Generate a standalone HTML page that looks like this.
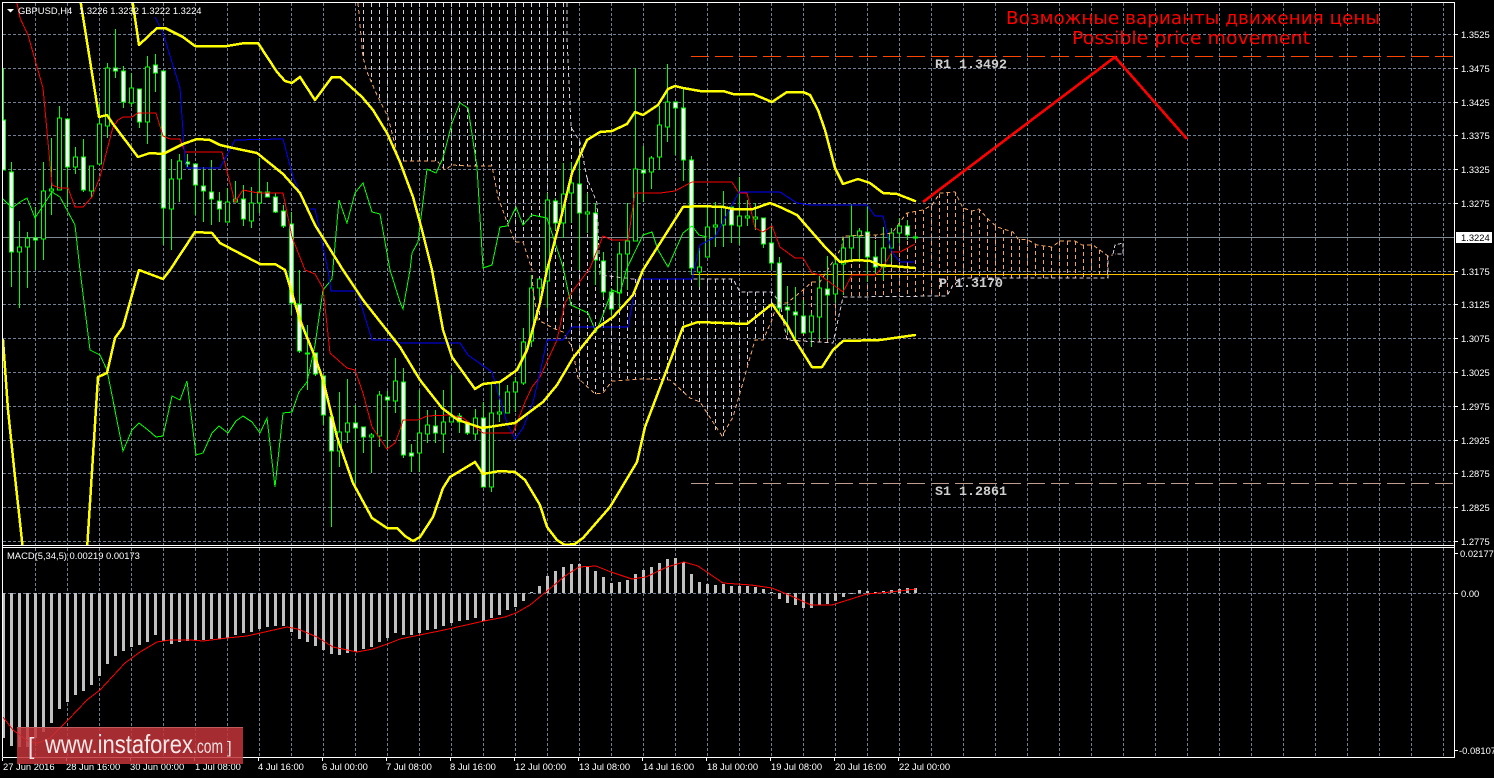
<!DOCTYPE html>
<html><head><meta charset="utf-8"><title>GBPUSD,H4</title>
<style>html,body{margin:0;padding:0;background:#000;width:1494px;height:778px;overflow:hidden}svg{display:block}
text{font-family:"Liberation Sans",sans-serif;font-size:9.4px;fill:#fff}
.m{font-family:"Liberation Mono",monospace;font-size:13.33px;fill:#cfcfcf;font-weight:bold}
.r{font-family:"DejaVu Sans","Liberation Sans",sans-serif;font-size:18px;fill:#f00}
.l{fill:none;shape-rendering:crispEdges}
</style></head><body>
<svg width="1494" height="778" viewBox="0 0 1494 778" xmlns="http://www.w3.org/2000/svg">
<defs><clipPath id="c"><rect x="3" y="3" width="1451" height="542"/></clipPath></defs>
<rect width="1494" height="778" fill="#000"/>
<!-- grid -->
<path class="l" stroke="#708090" stroke-dasharray="3 2" d="M3 34.5H1454M3 68.5H1454M3 102.5H1454M3 135.5H1454M3 169.5H1454M3 203.5H1454M3 271.5H1454M3 304.5H1454M3 338.5H1454M3 372.5H1454M3 406.5H1454M3 440.5H1454M3 473.5H1454M3 507.5H1454M3 541.5H1454M3 593.5H1454"/>
<path class="l" stroke="#708090" stroke-dasharray="3 2" d="M35.5 3V545M67.5 3V545M99.5 3V545M131.5 3V545M163.5 3V545M195.5 3V545M227.5 3V545M259.5 3V545M291.5 3V545M323.5 3V545M355.5 3V545M387.5 3V545M419.5 3V545M451.5 3V545M483.5 3V545M515.5 3V545M547.5 3V545M579.5 3V545M611.5 3V545M643.5 3V545M675.5 3V545M707.5 3V545M739.5 3V545M771.5 3V545M803.5 3V545M835.5 3V545M867.5 3V545M899.5 3V545M931.5 3V545M963.5 3V545M995.5 3V545M1027.5 3V545M1059.5 3V545M1091.5 3V545M1123.5 3V545M1155.5 3V545M1187.5 3V545M1219.5 3V545M1251.5 3V545M1283.5 3V545M1315.5 3V545M1347.5 3V545M1379.5 3V545M1411.5 3V545M1443.5 3V545"/>
<path class="l" stroke="#708090" stroke-dasharray="3 2" d="M35.5 548V757M67.5 548V757M99.5 548V757M131.5 548V757M163.5 548V757M195.5 548V757M227.5 548V757M259.5 548V757M291.5 548V757M323.5 548V757M355.5 548V757M387.5 548V757M419.5 548V757M451.5 548V757M483.5 548V757M515.5 548V757M547.5 548V757M579.5 548V757M611.5 548V757M643.5 548V757M675.5 548V757M707.5 548V757M739.5 548V757M771.5 548V757M803.5 548V757M835.5 548V757M867.5 548V757M899.5 548V757M931.5 548V757M963.5 548V757M995.5 548V757M1027.5 548V757M1059.5 548V757M1091.5 548V757M1123.5 548V757M1155.5 548V757M1187.5 548V757M1219.5 548V757M1251.5 548V757M1283.5 548V757M1315.5 548V757M1347.5 548V757M1379.5 548V757M1411.5 548V757M1443.5 548V757"/>
<g clip-path="url(#c)">
<!-- cloud hatch -->
<path class="l" stroke="#d8cbdc" stroke-dasharray="4 3" d="M363.5 3V57M371.5 3V82M379.5 3V100M387.5 3V115M395.5 3V150M403.5 3V161M411.5 3V161M419.5 3V161M427.5 3V161M435.5 3V161M443.5 3V168M451.5 3V165M459.5 3V166M467.5 3V166M475.5 3V166M483.5 3V166M491.5 3V166M499.5 3V198M507.5 3V222M515.5 3V242M523.5 3V242M531.5 3V268M539.5 3V320M547.5 3V325M555.5 3V329M563.5 3V332M571.5 127V347M579.5 142V378M587.5 178V388M595.5 203V394M603.5 275V393M611.5 275V381M619.5 276V380M627.5 278V379M635.5 279V379M643.5 279V379M651.5 279V379M659.5 279V379M667.5 279V380M675.5 279V385M683.5 279V393M691.5 279V398M699.5 279V402M707.5 279V415M715.5 279V430M723.5 279V436M731.5 279V420M739.5 292V393M747.5 292V365M755.5 292V340M763.5 292V340M771.5 292V320"/>
<path class="l" stroke="#f4a460" stroke-dasharray="4 3" d="M787.5 303V340M795.5 297V341M803.5 290V341M811.5 282V342M819.5 282V342M827.5 282V343M835.5 262V320M843.5 247V297M851.5 236V297M859.5 236V297M867.5 236V297M875.5 235V296M883.5 235V296M891.5 233V296M899.5 225V296M907.5 213V296M915.5 211V296M923.5 210V296M931.5 206V296M939.5 194V296M947.5 192V296M955.5 192V285M963.5 208V278M971.5 211V278M979.5 209V278M987.5 218V278M995.5 226V278M1003.5 230V278M1011.5 232V278M1019.5 239V278M1027.5 240V278M1035.5 244V278M1043.5 246V278M1051.5 247V278M1059.5 241V278M1067.5 241V278M1075.5 241V278M1083.5 245V278M1091.5 245V278M1099.5 250V278M1107.5 256V278"/>
<!-- horizontal lines -->
<path class="l" stroke="#808890" d="M3 237.5H1454"/>
<path class="l" stroke="#ffc000" d="M691 274.5H1454"/>
<path class="l" stroke="#ff4500" stroke-dasharray="18 6" d="M691 56.5H1454"/>
<path class="l" stroke="#bc9d8f" stroke-dasharray="18 6" d="M691 483.5H1454"/>
<!-- wicks -->
<path class="l" stroke="#0f0" d="M3.5 68V120M11.5 162V287M19.5 221V308M27.5 232V288M35.5 207V270M43.5 162V260M51.5 138V215M59.5 106V190M67.5 119V207M75.5 147V174M83.5 139V192M91.5 166V197M99.5 104V164M107.5 63V138M115.5 29V78M123.5 66V108M131.5 73V107M139.5 89V128M147.5 56V144M155.5 54V92M163.5 71V245M171.5 159V250M179.5 154V202M187.5 154V167M195.5 164V215M203.5 167V222M211.5 160V225M219.5 192V222M227.5 188V222M235.5 181V202M243.5 185V226M251.5 187V228M259.5 158V213M267.5 182V197M275.5 193V213M283.5 205V228M291.5 212V315M299.5 270V353M307.5 325V390M315.5 353V376M323.5 376V425M331.5 413V527M339.5 392V467M347.5 379V443M355.5 405V483M363.5 427V453M371.5 433V473M379.5 391V447M387.5 391V449M395.5 358V413M403.5 368V458M411.5 444V472M419.5 390V472M427.5 410V443M435.5 410V443M443.5 390V453M451.5 375V422M459.5 413V433M467.5 421V435M475.5 409V440M483.5 402V487M491.5 383V492M499.5 382V422M507.5 385V413M515.5 377V412M523.5 328V385M531.5 275V347M539.5 279V308M547.5 193V308M555.5 198V230M563.5 163V238M571.5 162V223M579.5 157V270M587.5 193V233M595.5 203V285M603.5 252V297M611.5 288V315M619.5 242V308M627.5 203V290M635.5 68V241M643.5 146V202M651.5 156V189M659.5 106V170M667.5 64V142M675.5 102V155M683.5 88V181M691.5 156V275M699.5 246V287M707.5 207V257M715.5 202V247M723.5 191V247M731.5 205V243M739.5 177V245M747.5 200V226M755.5 203V230M763.5 218V248M771.5 227V270M779.5 257V312M787.5 286V333M795.5 287V340M803.5 300V333M811.5 313V347M819.5 276V339M827.5 256V339M835.5 256V303M843.5 237V295M851.5 204V260M859.5 228V262M867.5 206V282M875.5 240V275M883.5 227V280M891.5 228V262M899.5 218V243M907.5 220V240M915.5 235V240"/>
<!-- bull bodies -->
<path class="l" stroke="#0f0" style="fill:#000" d="M17.5 247h4V252h-4zM25.5 238h4V247h-4zM41.5 191h4V239h-4zM49.5 189h4V191h-4zM57.5 118h4V190h-4zM73.5 157h4V167h-4zM89.5 166h4V191h-4zM97.5 124h4V164h-4zM105.5 68h4V126h-4zM129.5 88h4V103h-4zM145.5 67h4V122h-4zM169.5 179h4V209h-4zM177.5 161h4V179h-4zM225.5 202h4V222h-4zM233.5 199h4V202h-4zM249.5 203h4V221h-4zM257.5 192h4V203h-4zM337.5 432h4V451h-4zM345.5 423h4V432h-4zM369.5 435h4V437h-4zM377.5 395h4V436h-4zM393.5 381h4V401h-4zM417.5 433h4V453h-4zM425.5 425h4V434h-4zM441.5 422h4V434h-4zM449.5 417h4V422h-4zM473.5 418h4V434h-4zM489.5 413h4V487h-4zM497.5 412h4V414h-4zM505.5 392h4V413h-4zM513.5 382h4V392h-4zM521.5 342h4V383h-4zM529.5 288h4V341h-4zM537.5 279h4V288h-4zM545.5 200h4V281h-4zM561.5 194h4V223h-4zM569.5 183h4V193h-4zM585.5 212h4V214h-4zM617.5 254h4V293h-4zM625.5 241h4V254h-4zM633.5 169h4V241h-4zM649.5 158h4V172h-4zM657.5 125h4V157h-4zM665.5 102h4V127h-4zM697.5 267h4V272h-4zM705.5 227h4V257h-4zM713.5 225h4V227h-4zM721.5 207h4V225h-4zM737.5 216h4V226h-4zM745.5 216h4V218h-4zM753.5 217h4V219h-4zM809.5 316h4V332h-4zM817.5 288h4V317h-4zM833.5 264h4V294h-4zM841.5 248h4V264h-4zM849.5 236h4V248h-4zM857.5 231h4V236h-4zM881.5 248h4V267h-4zM889.5 233h4V248h-4zM897.5 226h4V233h-4zM913.5 237h4V238h-4z"/>
<!-- bear bodies -->
<path class="l" stroke="#0f0" style="fill:#fff" d="M1.5 120h4V170h-4zM9.5 172h4V252h-4zM33.5 238h4V240h-4zM65.5 119h4V167h-4zM81.5 157h4V190h-4zM113.5 68h4V71h-4zM121.5 71h4V102h-4zM137.5 89h4V122h-4zM153.5 65h4V73h-4zM161.5 71h4V208h-4zM185.5 162h4V164h-4zM193.5 164h4V185h-4zM201.5 186h4V191h-4zM209.5 192h4V199h-4zM217.5 201h4V209h-4zM241.5 199h4V219h-4zM265.5 192h4V197h-4zM273.5 197h4V212h-4zM281.5 211h4V226h-4zM289.5 224h4V303h-4zM297.5 304h4V351h-4zM305.5 353h4V354h-4zM313.5 353h4V374h-4zM321.5 376h4V415h-4zM329.5 417h4V451h-4zM353.5 423h4V428h-4zM361.5 427h4V437h-4zM385.5 397h4V400h-4zM401.5 382h4V455h-4zM409.5 453h4V456h-4zM433.5 426h4V433h-4zM457.5 416h4V422h-4zM465.5 423h4V433h-4zM481.5 418h4V487h-4zM553.5 201h4V223h-4zM577.5 184h4V213h-4zM593.5 213h4V260h-4zM601.5 261h4V292h-4zM609.5 292h4V309h-4zM641.5 170h4V173h-4zM673.5 102h4V108h-4zM681.5 108h4V160h-4zM689.5 160h4V268h-4zM729.5 207h4V225h-4zM761.5 218h4V244h-4zM769.5 243h4V263h-4zM777.5 263h4V308h-4zM785.5 307h4V310h-4zM793.5 312h4V315h-4zM801.5 316h4V333h-4zM825.5 289h4V295h-4zM865.5 232h4V257h-4zM873.5 257h4V267h-4zM905.5 226h4V235h-4z"/>
<!-- cloud edges -->
<polyline class="l" stroke="#f4a460" stroke-dasharray="4 3" points="358,3 363,57 367,72 377,95 388,117 398,157 400,161 437,161 445,170 452,165 467,166 492,166 498,197 507,222 515,242 523,242 532,270 533,290 538,320 555,329 563,332 572,347 578,378 595,394 603,393 612,381 643,379 670,380 690,398 700,402 722,436 733,417 740,393 755,340 763,340 772,320 777,303 787,303 803,290 812,282 820,282 842,247 843,236 875,235 892,233 903,218 907,213 923,210 932,205 940,193 955,192 963,208 972,211 979,209 987,218 997,227 1013,232 1018,239 1028,240 1037,245 1052,247 1060,241 1075,241 1082,245 1093,245 1108,256 1113,255"/>
<polyline class="l" stroke="#d8cbdc" stroke-dasharray="4 3" points="567,3 567,37 571,127 580,142 587,178 597,203 600,275 633,279 733,279 740,292 772,292 780,303 787,340 833,343 843,297 947,296 953,285 963,278 1108,278 1108,256"/>
<polyline class="l" stroke="#d8cbdc" stroke-dasharray="4 2" points="1113,254 1115,245 1123,243 1123,254 1115,254"/>
<!-- green chikou -->
<polyline class="l" stroke="#0f0" points="3,199 12,208 20,202 27,198 35,218 52,192 60,197 75,225 80,270 90,350 100,355 107,370 123,451 132,430 139,423 148,430 156,437 163,436 172,396 180,400 187,381 196,455 203,453 212,433 219,426 228,433 236,421 243,416 252,422 260,433 267,418 275,487 283,413 292,412 299,392 307,382 315,345 323,290 332,279 339,200 347,223 355,193 363,183 372,212 380,214 390,270 400,302 403,309 410,270 412,253 418,242 427,169 436,173 443,158 452,123 460,103 468,108 477,167 483,268 492,265 500,227 507,226 516,207 523,225 532,215 547,218 563,267 571,305 588,313 596,332 603,315 612,290 620,293 627,268 643,235 652,232 658,250 668,267 683,233 692,226 699,235 707,237"/>
<!-- red tenkan -->
<polyline class="l" stroke="#f00" points="17,3 20,18 28,35 43,88 52,185 60,188 68,188 75,207 83,207 92,197 100,177 113,127 118,120 123,117 132,117 138,113 156,113 163,136 170,139 180,139 185,152 222,152 235,202 243,190 258,193 283,193 292,237 305,270 315,274 323,288 330,353 347,368 355,370 363,393 372,427 387,449 395,443 400,430 403,420 418,420 427,416 450,415 463,418 483,433 513,433 525,402 532,387 540,377 557,340 565,303 572,292 590,268 603,236 612,240 628,240 635,193 660,193 675,191 692,182 732,182 739,193 747,193 755,228 763,232 772,226 780,247 795,258 803,258 812,273 820,275 843,292 852,275 875,275 883,267 892,252 900,252 915,244"/>
<!-- blue kijun -->
<polyline class="l" stroke="#00f" points="155,17 163,33 180,88 185,160 187,168 220,168 235,140 283,139 293,177 307,209 315,209 328,270 331,291 357,291 372,340 388,340 400,343 460,343 468,355 492,372 507,423 515,439 523,428 533,402 540,373 547,340 563,340 572,327 628,327 637,279 692,279 700,245 715,237 739,192 780,192 797,203 810,205 867,205 875,216 883,216 888,237 892,252 900,262 915,262"/>
<!-- bollinger -->
<g class="l" stroke="#ff0" stroke-width="2.5" stroke-linejoin="round" stroke-linecap="round" style="fill:none">
<polyline points="80,-2 99,117 107,115 113,124 138,157 150,153 163,154 183,144 197,139 210,140 220,145 233,148 257,153 283,174 300,193 315,225 343,270 363,300 400,347 420,380 442,408 458,420 482,428 515,423 543,402 557,385 573,358 597,328 613,317 633,295 643,270 683,207 700,206 723,207 733,209 753,209 770,203 780,207 797,215 825,247 840,262 857,260 870,261 880,265 915,268"/>
<polyline points="132,-2 139,45 157,28 165,28 183,37 195,46 227,46 245,43 258,43 277,72 285,81 292,83 300,77 315,100 332,77 340,77 362,97 373,110 387,133 400,162 413,197 422,230 432,270 443,330 452,357 475,389 483,384 500,382 517,370 527,350 540,303 547,270 563,210 572,173 587,140 600,132 612,131 627,124 635,112 643,115 658,105 668,89 675,86 683,88 700,91 723,91 733,94 753,94 772,102 787,92 803,92 810,95 818,110 825,130 835,168 843,184 858,179 870,183 883,193 897,194 915,201"/>
<polyline points="3,340 8,410 15,477 23,550"/>
<polyline points="87,550 98,377 107,373 115,338 123,327 139,270 147,273 163,279 170,270 195,232 212,233 220,243 260,264 275,264 285,270 300,320 315,357 323,380 337,437 353,483 372,518 387,528 397,528 405,536 413,541 420,537 433,517 443,488 450,477 475,462 483,474 500,471 515,472 525,480 540,505 547,527 557,540 565,545 575,544 583,538 610,507 637,462 645,427 683,327 698,322 747,324 772,304 787,325 795,340 812,367 822,367 833,350 843,341 880,340 915,335"/>
</g>
</g>
<!-- drawn arrow -->
<polyline points="923,202 1115,57 1187,139" fill="none" stroke="#f00" stroke-width="2.6" class="l"/>
<!-- labels on chart -->
<text class="m" x="935" y="68">R1 1.3492</text>
<text class="m" x="939" y="287">P 1.3170</text>
<text class="m" x="935" y="495">S1 1.2861</text>
<text class="r" x="1006" y="24" textLength="374" lengthAdjust="spacingAndGlyphs">Возможные варианты движения цены</text>
<text class="r" x="1072" y="44" textLength="238" lengthAdjust="spacingAndGlyphs">Possible price movement</text>
<!-- macd histogram -->
<path class="l" stroke="#c0c0c0" stroke-width="3" d="M3.5 593V738M11.5 593V746M19.5 593V747M27.5 593V747M35.5 593V738M43.5 593V732M51.5 593V723M59.5 593V709M67.5 593V702M75.5 593V695M83.5 593V691M91.5 593V685M99.5 593V676M107.5 593V664M115.5 593V656M123.5 593V651M131.5 593V647M139.5 593V645M147.5 593V642M155.5 593V635M163.5 593V641M171.5 593V644M179.5 593V642M187.5 593V641M195.5 593V640M203.5 593V640M211.5 593V639M219.5 593V639M227.5 593V638M235.5 593V635M243.5 593V633M251.5 593V632M259.5 593V629M267.5 593V627M275.5 593V626M283.5 593V626M291.5 593V632M299.5 593V639M307.5 593V642M315.5 593V646M323.5 593V650M331.5 593V654M339.5 593V655M347.5 593V653M355.5 593V652M363.5 593V649M371.5 593V647M379.5 593V642M387.5 593V638M395.5 593V633M403.5 593V635M411.5 593V635M419.5 593V633M427.5 593V630M435.5 593V629M443.5 593V626M451.5 593V623M459.5 593V621M467.5 593V620M475.5 593V618M483.5 593V621M491.5 593V618M499.5 593V615M507.5 593V610M515.5 593V607M523.5 593V601M531.5 593V592M539.5 593V586M547.5 593V576M555.5 593V571M563.5 593V567M571.5 593V564M579.5 593V564M587.5 593V567M595.5 593V571M603.5 593V577M611.5 593V583M619.5 593V582M627.5 593V580M635.5 593V574M643.5 593V570M651.5 593V567M659.5 593V563M667.5 593V559M675.5 593V558M683.5 593V562M691.5 593V574M699.5 593V582M707.5 593V584M715.5 593V585M723.5 593V584M731.5 593V586M739.5 593V586M747.5 593V586M755.5 593V587M763.5 593V589M771.5 593V592M779.5 593V599M787.5 593V603M795.5 593V605M803.5 593V608M811.5 593V608M819.5 593V605M827.5 593V604M835.5 593V601M843.5 593V597M851.5 593V594M859.5 593V590M867.5 593V591M875.5 593V592M883.5 593V591M891.5 593V590M899.5 593V589M907.5 593V588M915.5 593V588"/>
<polyline class="l" stroke="#f00" points="3,717 13,730 28,741 38,743 50,738 68,720 87,700 100,690 125,663 140,652 157,642 170,640 190,640 203,641 227,638 247,636 287,627 298,629 317,637 333,647 357,652 373,649 390,643 400,639 444,630 484,621 505,617 516,613 530,605 547,591 565,576 579,567 596,566 611,572 632,579 646,577 667,567 684,562 698,566 723,583 751,585 772,588 789,595 811,605 832,605 867,594 891,592 916,589"/>
<!-- frame -->
<path class="l" stroke="#fff" d="M2.5 757.5V2.5H1454.5V757.5H2.5M3 545.5H1454M3 547.5H1454"/>
<!-- ticks -->
<path class="l" stroke="#fff" d="M1455 34.5h3M1455 68.5h3M1455 102.5h3M1455 135.5h3M1455 169.5h3M1455 203.5h3M1455 271.5h3M1455 304.5h3M1455 338.5h3M1455 372.5h3M1455 406.5h3M1455 440.5h3M1455 473.5h3M1455 507.5h3M1455 541.5h3M1455 553.5h3M1455 593.5h3M1455 750.5h3M66.5 758v3M130.5 758v3M194.5 758v3M258.5 758v3M322.5 758v3M386.5 758v3M450.5 758v3M514.5 758v3M578.5 758v3M642.5 758v3M706.5 758v3M770.5 758v3M834.5 758v3M898.5 758v3M2.5 758v3"/>
<!-- price labels -->
<text x="1461" y="38">1.3525</text><text x="1461" y="72">1.3475</text><text x="1461" y="106">1.3425</text><text x="1461" y="139">1.3375</text><text x="1461" y="173">1.3325</text><text x="1461" y="207">1.3275</text><text x="1461" y="275">1.3175</text><text x="1461" y="308">1.3125</text><text x="1461" y="342">1.3075</text><text x="1461" y="376">1.3025</text><text x="1461" y="410">1.2975</text><text x="1461" y="444">1.2925</text><text x="1461" y="477">1.2875</text><text x="1461" y="511">1.2825</text><text x="1461" y="545">1.2775</text>
<rect x="1456" y="232" width="36" height="11" fill="#fff"/><text x="1461" y="241" style="fill:#000">1.3224</text>
<text x="1460" y="557">0.02177</text><text x="1461" y="597">0.00</text><text x="1459" y="754">-0.08107</text>
<!-- time labels -->
<text x="3" y="770">27 Jun 2016</text><text x="66" y="770">28 Jun 16:00</text><text x="130" y="770">30 Jun 00:00</text><text x="195" y="770">1 Jul 08:00</text><text x="258" y="770">4 Jul 16:00</text><text x="322" y="770">6 Jul 00:00</text><text x="386" y="770">7 Jul 08:00</text><text x="450" y="770">8 Jul 16:00</text><text x="515" y="770">12 Jul 00:00</text><text x="579" y="770">13 Jul 08:00</text><text x="643" y="770">14 Jul 16:00</text><text x="707" y="770">18 Jul 00:00</text><text x="771" y="770">19 Jul 08:00</text><text x="835" y="770">20 Jul 16:00</text><text x="899" y="770">22 Jul 00:00</text>
<!-- header -->
<path d="M7 9h7l-3.5 3.5z" fill="#fff"/>
<text x="18" y="14">GBPUSD,H4</text>
<text x="79" y="14">1.3226 1.3232 1.3222 1.3224</text>
<text x="7" y="559">MACD(5,34,5) 0.00219 0.00173</text>
<!-- logo -->
<rect x="17" y="727" width="226" height="37" fill="#c23439" fill-opacity=".85"/>
<rect x="17" y="727" width="226" height="1" fill="#c05a5c"/>
<text x="28" y="754" style="font-size:23px;fill:#f0e0e0">[</text>
<text x="45" y="753" style="font-size:26px;fill:#f4e8e8" textLength="148" lengthAdjust="spacingAndGlyphs">www.instaforex</text>
<text x="193" y="753" style="font-size:19px;fill:#f0e0e0" textLength="30" lengthAdjust="spacingAndGlyphs">.com</text>
<text x="227" y="753" style="font-size:17px;fill:#f0e0e0">]</text>
</svg>
</body></html>
